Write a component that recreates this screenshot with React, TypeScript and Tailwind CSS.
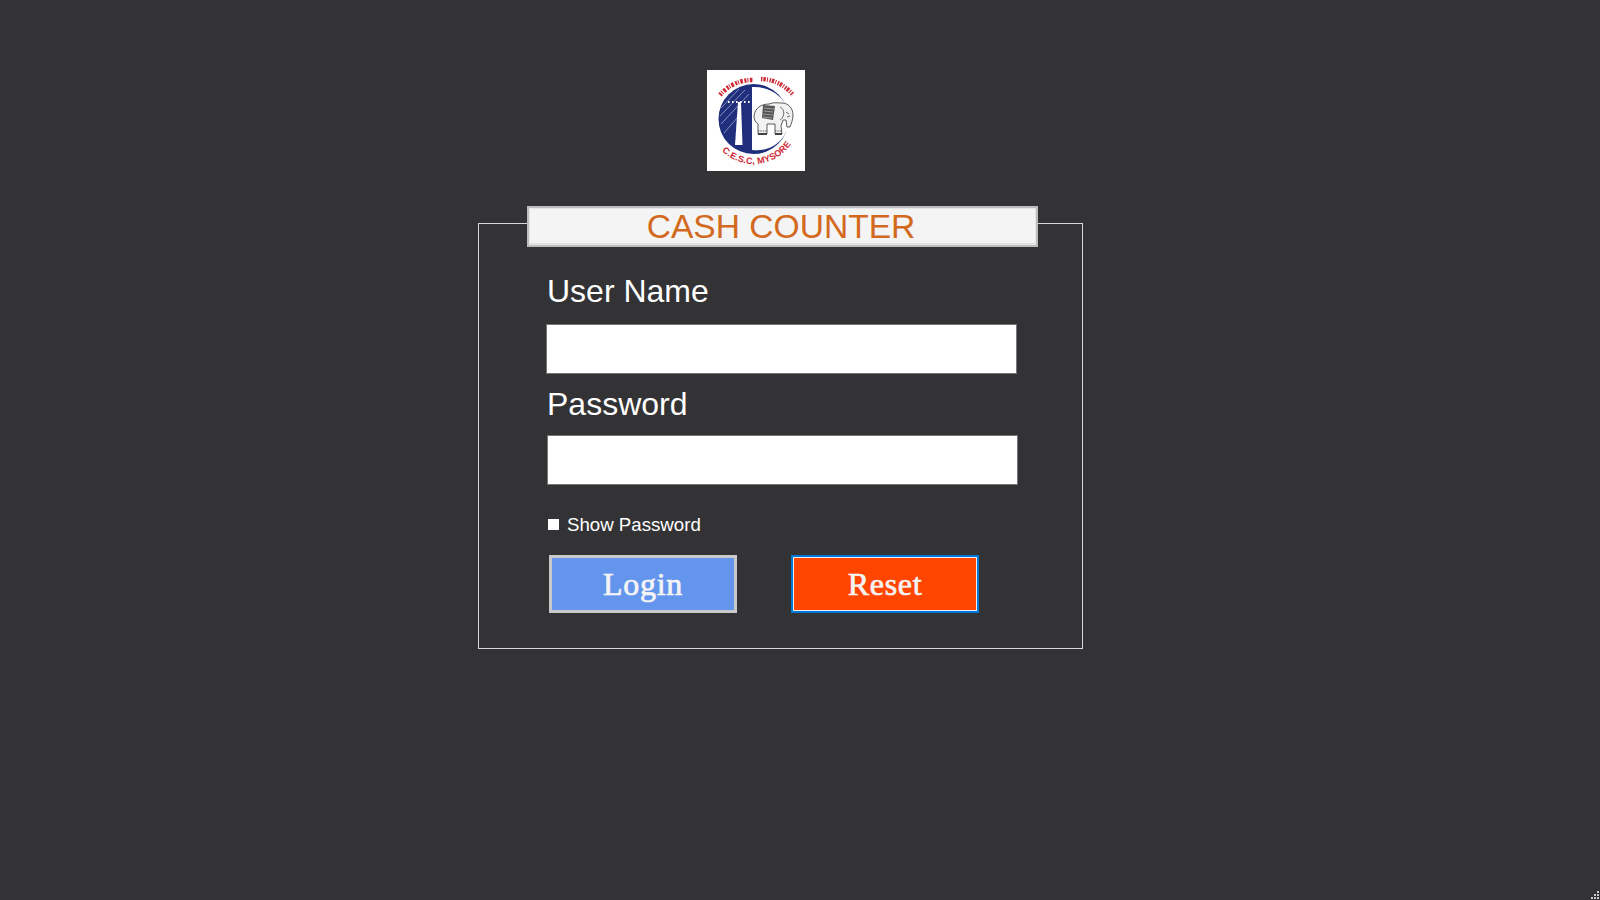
const sans = { fontFamily: '"Liberation Sans", Arial, sans-serif' };

function Logo() {
  return (
    <div className="ml-[707px] h-[101px] w-[98px] bg-white">
      <svg width="98" height="101" viewBox="0 0 98 101">
        <defs>
          <path id="bottom-arc" d="M15 81 A45 45 0 0 0 84 74" />
        </defs>
        {/* blue disc, opened up on the right as a C */}
        <circle cx="46.5" cy="49" r="35" fill="#1f2f7c" />
        <path d="M45 17 C62 16 77 26 81 40 L90 40 L90 62 L79 62 C74 74 60 82 45 80 Z" fill="#fff" />
        {/* tower and wires */}
        <path d="M28 75 L31 32 L34 32 L35.5 75 Z" fill="#fff" />
        <path d="M14 38 L32 19 M13 46 L38 20 M14 54 L42 24 M17 63 L30 48" stroke="#c9d0ee" strokeWidth="0.6" fill="none" />
        <path d="M21 32 H43" stroke="#fff" strokeWidth="2" strokeDasharray="1.6 2.4" />
        {/* elephant */}
        <path d="M47 46 C48 38 54 34 62 34 C66 32 72 33 75 33 C81 33 86 38 86 45 C86 50 84 54 83 57 L80 57 L79 50 L76 50 L74 56 L75 64 L68 64 L68 54 L60 54 L60 64 L51 64 L51 54 C48 52 47 49 47 46 Z" fill="#f2f2f2" stroke="#333" strokeWidth="0.8" />
        <path d="M56 35 L68 36 L66 50 L55 48 Z" fill="#555" />
        <path d="M57 38 L67 39 M57 41 L66 42 M56 44 L66 45 M56 47 L65 48" stroke="#ccc" strokeWidth="0.6" />
        <path d="M51 61 H60 M68 61 H75" stroke="#555" strokeWidth="1" strokeDasharray="1.4 1" />
        <path d="M51 64 H60 M68 64 H75" stroke="#222" strokeWidth="1.6" />
        <path d="M73 37 C78 39 78 47 73 50 M79 42 L82 44 M80 47 L83 46" stroke="#333" strokeWidth="0.7" fill="none" />
        {/* Kannada lettering round the top, too small to read in the source */}
        <path d="M13 25 A42 42 0 0 1 47 10" stroke="#cc2733" strokeWidth="4.5" strokeDasharray="2 1 1 1.4 2.6 1.6" fill="none" />
        <path d="M54 9 A42 42 0 0 1 86 25" stroke="#cc2733" strokeWidth="4.5" strokeDasharray="1.4 1 2.4 1.2 1 1.6" fill="none" />
        <text fill="#cc2733" fontSize="9" fontWeight="700" style={sans}>
          <textPath href="#bottom-arc" textLength="79">C.E.S.C, MYSORE</textPath>
        </text>
      </svg>
    </div>
  );
}

export default function App() {
  return (
    <div className="relative h-[900px] overflow-hidden bg-[#333335] pt-[70px] text-white" style={sans}>
      <Logo />

      <div className="ml-[478px] mt-[52px] h-[426px] w-[605px] border border-[#d8d8d8]">
        <div className="-mt-[18px] ml-[48px] flex h-[41px] w-[511px] items-center justify-center border-2 border-[#bdbdbd] bg-[#f4f4f4] pr-[3px] text-[33.6px] leading-none text-[#d2691e] shadow-[inset_0_0_0_1px_#e6e6e6,inset_0_-2px_0_#dedede]">
          CASH COUNTER
        </div>

        <div className="pl-[67px]">
          <div className="ml-px mt-[26px] text-[32px] leading-[37px]">User Name</div>
          <input className="mt-[14px] block h-[50px] w-[471px] border border-[#767676] bg-white" />
          <div className="ml-px mt-[12px] text-[32px] leading-[37px]">Password</div>
          <input className="ml-px mt-[12px] block h-[50px] w-[471px] border border-[#767676] bg-white" />

          <div className="ml-[2px] mt-[26px] flex h-[26px] items-center gap-2 text-[18.67px] leading-[26px]">
            <span className="h-[11px] w-[11px] bg-white" />
            <span className="mt-[2px]">Show Password</span>
          </div>

          <div className="ml-[3px] mt-[18px] flex gap-[54px] text-[32px] tracking-[0.7px] text-[#f4f4f4] [-webkit-text-stroke:0.7px_#f4f4f4]" style={{ fontFamily: '"Liberation Serif", serif' }}>
            <button className="h-[58px] w-[188px] border-[3px] border-[#c9c9c9] bg-[#6495ed]">
              Login
            </button>
            <button className="h-[58px] w-[188px] border-2 border-[#0078d7] bg-[#ff4500] outline outline-1 -outline-offset-3 outline-[#eeeeee]">
              Reset
            </button>
          </div>
        </div>
      </div>

      {/* window resize grip */}
      <svg className="absolute bottom-0 right-0" width="10" height="10" viewBox="0 0 10 10" fill="#c8c8c8">
        <rect x="7" y="1" width="2" height="2" />
        <rect x="4" y="4" width="2" height="2" />
        <rect x="7" y="4" width="2" height="2" />
        <rect x="1" y="7" width="2" height="2" />
        <rect x="4" y="7" width="2" height="2" />
        <rect x="7" y="7" width="2" height="2" />
      </svg>
    </div>
  );
}
